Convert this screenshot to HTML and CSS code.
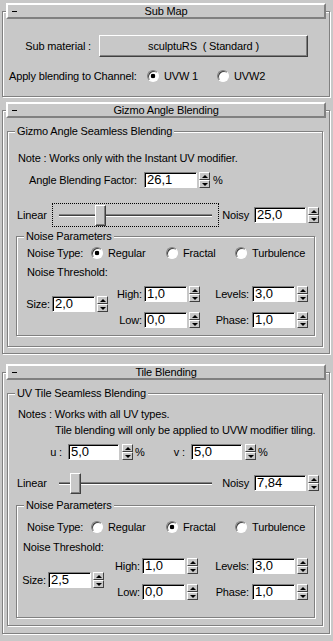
FILE: index.html
```html
<!DOCTYPE html>
<html lang="en">
<head>
    <meta charset="UTF-8">
    <title>Blending</title>
    <link rel="stylesheet" href="styles.css">
</head>
<body>
    <!-- Sub Map -->
    <div class="rollout">
        <div class="roll-head"><span class="roll-minus"></span><span class="roll-title">Sub Map</span></div>
        <div class="roll-frame submap">
            <div class="row sub-row">
                <span class="sub-lbl">Sub material :</span>
                <span class="btn sub-btn">sculptuRS&nbsp;&nbsp;( Standard )</span>
            </div>
            <div class="row chan-row">
                <span class="chan-lbl">Apply blending to Channel:</span>
                <span class="radio-item chan-item"><span class="radio on"></span>UVW 1</span>
                <span class="radio-item"><span class="radio"></span>UVW2</span>
            </div>
        </div>
    </div>

    <!-- Gizmo Angle Blending -->
    <div class="rollout r-gizmo">
        <div class="roll-head"><span class="roll-minus"></span><span class="roll-title">Gizmo Angle Blending</span></div>
        <div class="roll-frame">
            <div class="group main-group">
                <div class="group-lbl">Gizmo Angle Seamless Blending</div>
                <div class="note">Note : Works only with the Instant UV modifier.</div>
                <div class="row angle-row">
                    <span class="lbl angle-lbl">Angle Blending Factor:</span>
                    <span class="field w53">26,1</span>
                    <span class="spin"><i class="up"></i><i class="dn"></i></span>
                    <span class="pct">%</span>
                </div>
                <div class="row slider-row">
                    <span class="slider-lbl">Linear</span>
                    <div class="slider focus">
                        <span class="track" style="width: 36px"></span>
                        <span class="thumb"></span>
                        <span class="track rest"></span>
                    </div>
                    <span class="lbl noisy-lbl">Noisy</span>
                    <span class="field w52">25,0</span>
                    <span class="spin"><i class="up"></i><i class="dn"></i></span>
                </div>
                <div class="group noise">
                    <div class="group-lbl">Noise Parameters</div>
                    <div class="row type-row">
                        <span class="type-lbl">Noise Type:</span>
                        <span class="radio-item t1"><span class="radio on"></span>Regular</span>
                        <span class="radio-item t2"><span class="radio"></span>Fractal</span>
                        <span class="radio-item"><span class="radio"></span>Turbulence</span>
                    </div>
                    <div class="thresh-lbl">Noise Threshold:</div>
                    <div class="thresh">
                        <div class="col c1">
                            <div class="row"><span class="lbl">Size:</span><span class="field">2,0</span><span class="spin"><i class="up"></i><i class="dn"></i></span></div>
                        </div>
                        <div class="col c2">
                            <div class="row"><span class="lbl">High:</span><span class="field">1,0</span><span class="spin"><i class="up"></i><i class="dn"></i></span></div>
                            <div class="row"><span class="lbl">Low:</span><span class="field">0,0</span><span class="spin"><i class="up"></i><i class="dn"></i></span></div>
                        </div>
                        <div class="col c3">
                            <div class="row"><span class="lbl">Levels:</span><span class="field">3,0</span><span class="spin"><i class="up"></i><i class="dn"></i></span></div>
                            <div class="row"><span class="lbl">Phase:</span><span class="field">1,0</span><span class="spin"><i class="up"></i><i class="dn"></i></span></div>
                        </div>
                    </div>
                </div>
            </div>
        </div>
    </div>

    <!-- Tile Blending -->
    <div class="rollout r-tile">
        <div class="roll-head"><span class="roll-minus"></span><span class="roll-title">Tile Blending</span></div>
        <div class="roll-frame">
            <div class="group main-group">
                <div class="group-lbl">UV Tile Seamless Blending</div>
                <div class="note">Notes : Works with all UV types.</div>
                <div class="note note2">Tile blending will only be applied to UVW modifier tiling.</div>
                <div class="row uv-row">
                    <span class="lbl u-lbl">u :</span>
                    <span class="field w51">5,0</span>
                    <span class="spin"><i class="up"></i><i class="dn"></i></span>
                    <span class="pct">%</span>
                    <span class="lbl v-lbl">v :</span>
                    <span class="field w51">5,0</span>
                    <span class="spin"><i class="up"></i><i class="dn"></i></span>
                    <span class="pct">%</span>
                </div>
                <div class="row slider-row">
                    <span class="slider-lbl">Linear</span>
                    <div class="slider">
                        <span class="track" style="width: 11px"></span>
                        <span class="thumb"></span>
                        <span class="track rest"></span>
                    </div>
                    <span class="lbl noisy-lbl">Noisy</span>
                    <span class="field w52">7,84</span>
                    <span class="spin"><i class="up"></i><i class="dn"></i></span>
                </div>
                <div class="group noise">
                    <div class="group-lbl">Noise Parameters</div>
                    <div class="row type-row">
                        <span class="type-lbl">Noise Type:</span>
                        <span class="radio-item t1"><span class="radio"></span>Regular</span>
                        <span class="radio-item t2"><span class="radio on"></span>Fractal</span>
                        <span class="radio-item"><span class="radio"></span>Turbulence</span>
                    </div>
                    <div class="thresh-lbl">Noise Threshold:</div>
                    <div class="thresh">
                        <div class="col c1">
                            <div class="row"><span class="lbl">Size:</span><span class="field">2,5</span><span class="spin"><i class="up"></i><i class="dn"></i></span></div>
                        </div>
                        <div class="col c2">
                            <div class="row"><span class="lbl">High:</span><span class="field">1,0</span><span class="spin"><i class="up"></i><i class="dn"></i></span></div>
                            <div class="row"><span class="lbl">Low:</span><span class="field">0,0</span><span class="spin"><i class="up"></i><i class="dn"></i></span></div>
                        </div>
                        <div class="col c3">
                            <div class="row"><span class="lbl">Levels:</span><span class="field">3,0</span><span class="spin"><i class="up"></i><i class="dn"></i></span></div>
                            <div class="row"><span class="lbl">Phase:</span><span class="field">1,0</span><span class="spin"><i class="up"></i><i class="dn"></i></span></div>
                        </div>
                    </div>
                </div>
            </div>
        </div>
    </div>
</body>
</html>
```

FILE: styles.css
```css
* {
    box-sizing: border-box;
}

body {
    margin: 0;
    width: 333px;
    height: 641px;
    overflow: hidden;
    background: #c8c8c8;
    font-family: 'Liberation Sans', Arial, sans-serif;
    font-size: 11px;
    line-height: 14px;
    letter-spacing: -0.15px;
    color: #000;
}

/* rollouts */
.rollout {
    padding-top: 3px;
}

.r-gizmo {
    margin-top: 2px;
}

.r-tile {
    margin-top: 7px;
}

.roll-head {
    position: relative;
    z-index: 1;
    height: 16px;
    width: 320px;
    margin-left: 6px;
    border: 2px solid;
    border-color: #fff #808080 #808080 #fff;
    background: #c8c8c8;
    display: grid;
    grid-template-columns: 20px 1fr 20px;
    align-items: center;
}

.roll-minus {
    width: 5px;
    height: 1px;
    margin-left: 4px;
    background: #000;
}

.roll-title {
    text-align: center;
    line-height: 12px;
}

.roll-frame {
    width: 328px;
    margin: -8px 0 0 2px;
    border: 1px solid #808080;
    box-shadow: inset 1px 1px #fff, 1px 1px #fff;
    padding-bottom: 6px;
}

.submap {
    padding: 23px 0 13px;
}

/* group boxes */
.group {
    border: 1px solid #808080;
    box-shadow: inset 1px 1px #fff, 1px 1px #fff;
}

.group-lbl {
    width: max-content;
    margin: -8px 0 0 7px;
    padding: 0 2px;
    background: #c8c8c8;
}

.main-group {
    width: 316px;
    margin: 20px 0 0 4px;
    padding-bottom: 10px;
}

.noise {
    width: 299px;
    margin: 9px 0 0 8px;
    padding-bottom: 7px;
}

/* rows */
.row {
    display: flex;
    align-items: center;
    height: 16px;
}

.lbl {
    text-align: right;
    white-space: nowrap;
}

.note {
    padding-left: 10px;
    margin-top: 13px;
    white-space: nowrap;
}

.angle-row {
    margin-top: 7px;
}

.angle-lbl {
    width: 129px;
    margin-right: 7px;
}

.pct {
    margin-left: 3px;
    width: 10px;
}

/* sub map */
.sub-row {
    height: 22px;
}

.sub-lbl {
    width: 88px;
    text-align: right;
    margin-right: 8px;
}

.btn {
    height: 22px;
    border: 1px solid;
    border-color: #fff #404040 #404040 #fff;
    box-shadow: inset -1px -1px #808080;
    display: flex;
    align-items: center;
    justify-content: center;
}

.sub-btn {
    width: 209px;
}

.chan-row {
    height: 14px;
    margin-top: 12px;
    padding-left: 6px;
}

.chan-lbl {
    width: 138px;
}

.chan-item {
    width: 70px;
}

/* radios */
.radio-item {
    display: flex;
    align-items: center;
}

.radio {
    width: 12px;
    height: 12px;
    margin-right: 5px;
    border-radius: 50%;
    border: 1px solid;
    border-color: #808080 #fff #fff #808080;
    box-shadow: inset 1px 1px #404040;
    background: #fff;
}

.radio.on {
    background: radial-gradient(circle, #000 0 2px, #fff 2.6px);
}

/* inputs */
.field {
    width: 43px;
    height: 16px;
    padding-left: 2px;
    border: 1px solid;
    border-color: #808080 #fff #fff #808080;
    box-shadow: inset 1px 1px #000;
    background: #fff;
    font-size: 13px;
    line-height: 14px;
    letter-spacing: 0;
}

.w51 {
    width: 51px;
}

.w52 {
    width: 52px;
}

.w53 {
    width: 53px;
}

.spin {
    width: 11px;
    height: 16px;
    margin-left: 2px;
    display: flex;
    flex-direction: column;
}

.spin i {
    flex: 1;
    border: 1px solid;
    border-color: #fff #404040 #404040 #fff;
    background: #c8c8c8;
    display: flex;
    align-items: center;
    justify-content: center;
}

.spin i::before {
    content: '';
    border-left: 3px solid transparent;
    border-right: 3px solid transparent;
}

.spin .up::before {
    border-bottom: 3px solid #000;
}

.spin .dn::before {
    border-top: 3px solid #000;
}

/* slider */
.slider-row {
    height: 24px;
    margin-top: 15px;
}

.slider-lbl {
    width: 44px;
    padding-left: 9px;
}

.slider {
    width: 167px;
    height: 24px;
    padding: 0 6px;
    border: 1px dotted transparent;
    display: flex;
    align-items: center;
}

.slider.focus {
    border-color: #000;
}

.track {
    height: 3px;
    border-top: 1px solid #808080;
    border-bottom: 1px solid #fff;
    background: #404040;
}

.track.rest {
    flex: 1;
}

.thumb {
    width: 11px;
    height: 21px;
    border: 1px solid;
    border-color: #fff #404040 #404040 #fff;
    box-shadow: inset -1px -1px #808080;
    background: #c8c8c8;
}

.noisy-lbl {
    width: 35px;
    padding-right: 5px;
}

/* noise parameters */
.type-row {
    height: 14px;
    margin-top: 3px;
    padding-left: 10px;
}

.type-lbl {
    width: 64px;
}

.t1 {
    width: 75px;
}

.t2 {
    width: 69px;
}

.thresh-lbl {
    margin-top: 5px;
    padding-left: 10px;
}

.thresh {
    display: flex;
    margin-top: 7px;
}

.col {
    display: flex;
    flex-direction: column;
    gap: 10px;
}

.thresh .lbl {
    margin-right: 2px;
}

.c1 {
    padding-top: 10px;
}

.c1 .lbl {
    width: 33px;
}

.c2 .lbl {
    width: 34px;
}

.c3 .lbl {
    width: 49px;
    margin-right: 3px;
}

/* tile blending tweaks */
.r-tile .main-group {
    padding-bottom: 7px;
}

.r-tile .roll-frame {
    padding-bottom: 7px;
}

.r-tile .note {
    margin-top: 7px;
}

.r-tile .note2 {
    margin-top: 2px;
    padding-left: 47px;
}

.uv-row {
    margin-top: 7px;
}

.u-lbl {
    width: 54px;
    margin-right: 6px;
}

.v-lbl {
    width: 40px;
    margin-right: 6px;
}

.uv-row .spin {
    margin-left: 3px;
}

.uv-row .pct {
    margin-left: 2px;
}

.r-tile .slider-row {
    margin-top: 11px;
}

.r-tile .noise {
    margin-top: 10px;
    padding-bottom: 17px;
}

.r-tile .type-row {
    margin-top: 8px;
}

.r-tile .thresh-lbl {
    margin-top: 6px;
    padding-left: 6px;
}

.r-tile .thresh {
    margin-top: 4px;
}

.r-tile .c1 {
    padding-top: 14px;
}

.r-tile .c1 .lbl {
    width: 29px;
}

.r-tile .c2 .lbl {
    width: 36px;
}

.r-tile .c3 .lbl {
    width: 51px;
}
```
